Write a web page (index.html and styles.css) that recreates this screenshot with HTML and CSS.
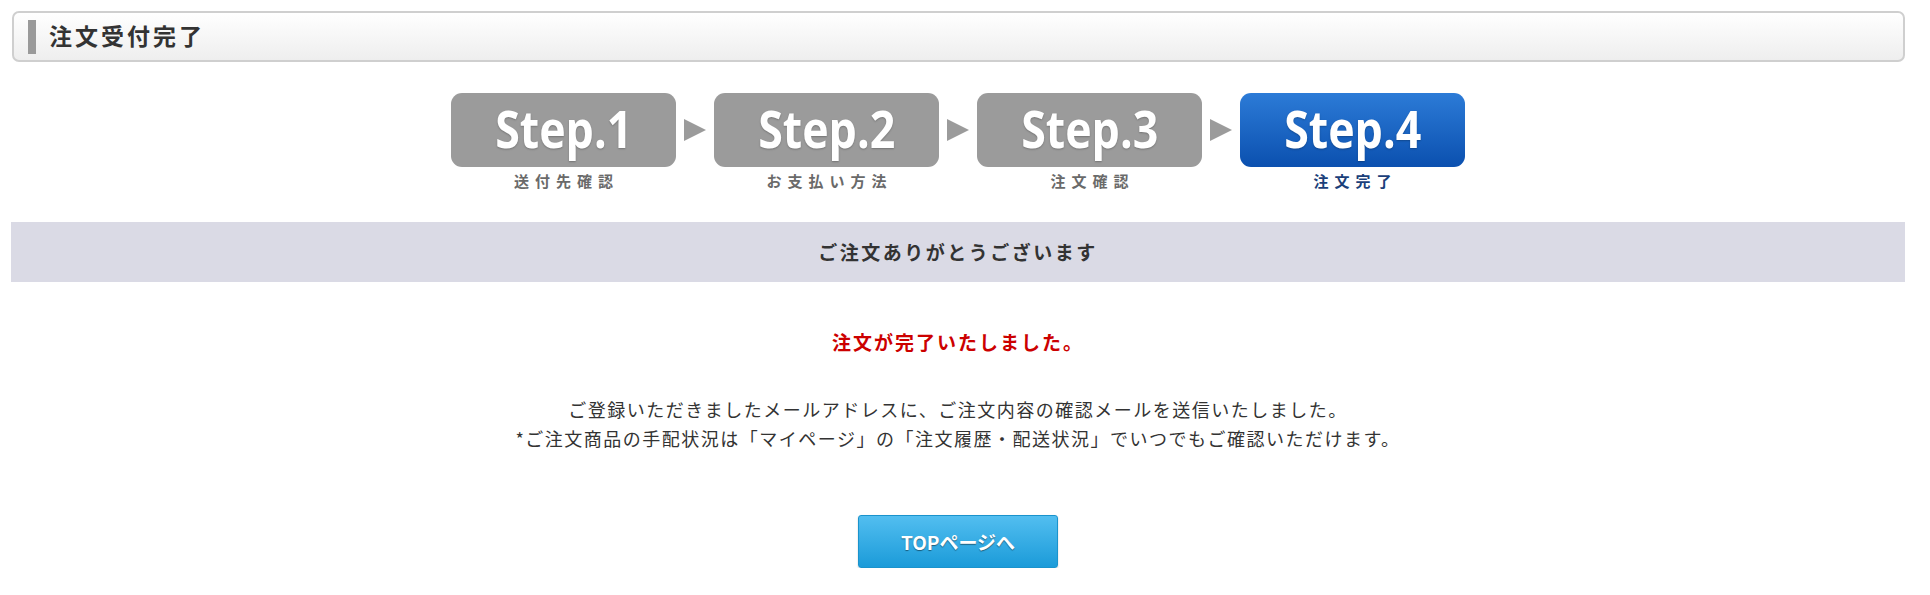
FILE: index.html
```html
<!DOCTYPE html>
<html lang="ja">

<head>
  <meta charset="UTF-8" />
  <title>注文受付完了</title>
  <link rel="stylesheet" href="styles.css">
</head>

<body>
  <div class="page">
    <div class="page-title">
      <span class="title-bar"></span>
      <h1>注文受付完了</h1>
    </div>

    <ol class="steps">
      <li class="step">
        <div class="step-box"><span>Step.1</span></div>
        <div class="step-label">送付先確認</div>
      </li>
      <li class="step-arrow"></li>
      <li class="step">
        <div class="step-box"><span>Step.2</span></div>
        <div class="step-label">お支払い方法</div>
      </li>
      <li class="step-arrow"></li>
      <li class="step">
        <div class="step-box"><span>Step.3</span></div>
        <div class="step-label">注文確認</div>
      </li>
      <li class="step-arrow"></li>
      <li class="step current">
        <div class="step-box"><span>Step.4</span></div>
        <div class="step-label">注文完了</div>
      </li>
    </ol>

    <div class="thanks">ご注文ありがとうございます</div>

    <p class="done">注文が完了いたしました。</p>
    <p class="message">
      ご登録いただきましたメールアドレスに、ご注文内容の確認メールを送信いたしました。<br>
      *ご注文商品の手配状況は「マイページ」の「注文履歴・配送状況」でいつでもご確認いただけます。
    </p>

    <div class="actions">
      <a class="btn-top" href="#">TOPページへ</a>
    </div>
  </div>
</body>

</html>
```

FILE: styles.css
```css
body {
  margin: 0;
  font-family: "Noto Sans CJK JP", "Noto Sans", sans-serif;
  color: #333;
  background: #fff;
}

.page {
  margin: 11px 25px 0 11px;
}

.page-title {
  display: flex;
  align-items: center;
  height: 47px;
  margin-left: 1px;
  padding-left: 14px;
  border: 2px solid #cfcfcf;
  border-radius: 7px;
  background: linear-gradient(#ffffff, #eeeeee);
}

.title-bar {
  width: 8px;
  height: 34px;
  background: #9a9a9a;
}

.page-title h1 {
  margin: 0 0 4px 13px;
  font-size: 23px;
  font-weight: bold;
  letter-spacing: 3px;
  color: #333;
}

.steps {
  display: flex;
  justify-content: center;
  list-style: none;
  margin: 31px 0 0;
  padding: 0;
}

.step {
  width: 225px;
  text-align: center;
}

.step-box {
  height: 74px;
  line-height: 70px;
  border-radius: 11px;
  background: #9b9b9b;
  color: #fff;
  font-family: "Open Sans", sans-serif;
  font-size: 52px;
  font-weight: 700;
  text-shadow: 0 1px 2px rgba(0, 0, 0, 0.25);
}

.step-box span {
  display: inline-block;
  transform: scaleX(0.86);
}

.step-label {
  margin-top: 4px;
  line-height: 20px;
  font-size: 15px;
  font-weight: bold;
  letter-spacing: 6px;
  padding-left: 6px;
  color: #6a6a6a;
}

.current .step-box {
  background: linear-gradient(#2c7bd7, #0b50af);
}

.current .step-label {
  color: #1b3f7a;
}

.step-arrow {
  display: flex;
  align-items: center;
  justify-content: center;
  width: 38px;
  height: 74px;
}

.step-arrow::before {
  content: "";
  width: 0;
  height: 0;
  margin-left: -1px;
  border-left: 22px solid #9b9b9b;
  border-top: 11px solid transparent;
  border-bottom: 11px solid transparent;
}

.thanks {
  margin-top: 31px;
  height: 60px;
  line-height: 60px;
  background: #dadae5;
  text-align: center;
  font-size: 19px;
  font-weight: bold;
  letter-spacing: 2.5px;
}

.done {
  margin: 45px 0 0;
  line-height: 30px;
  text-align: center;
  color: #cc0000;
  font-size: 19px;
  font-weight: bold;
  letter-spacing: 2px;
}

.message {
  margin: 38px 0 0;
  line-height: 29px;
  text-align: center;
  font-size: 18px;
  letter-spacing: 1.5px;
}

.actions {
  margin-top: 62px;
  text-align: center;
}

.btn-top {
  display: inline-block;
  box-sizing: border-box;
  width: 200px;
  height: 53px;
  line-height: 51px;
  border: 1px solid #1a93cc;
  border-radius: 3px;
  background: linear-gradient(#52bef0, #1b9bd9);
  box-shadow: 0 1px 2px rgba(0, 0, 0, 0.2);
  color: #fff;
  font-size: 19px;
  font-weight: bold;
  text-decoration: none;
  text-shadow: 0 1px 1px rgba(0, 0, 0, 0.45);
}
```
